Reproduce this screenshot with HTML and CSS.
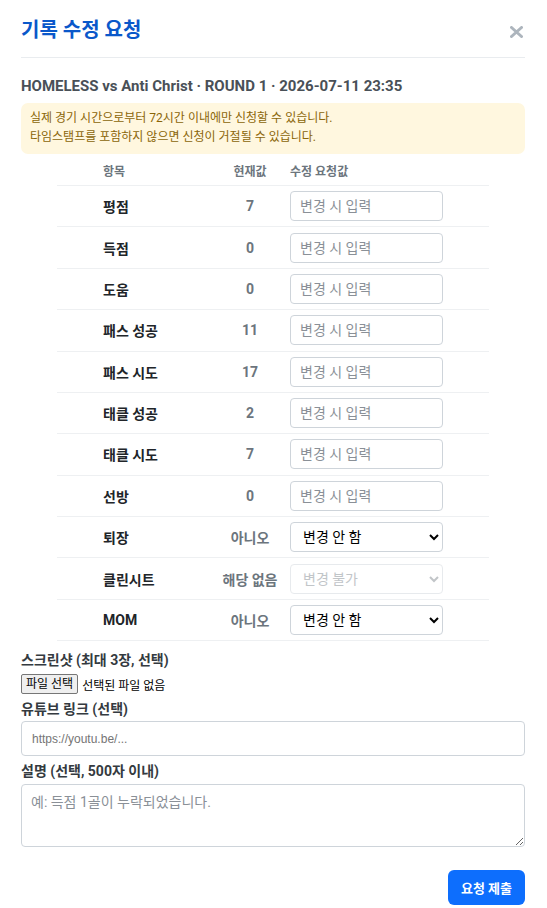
FILE: index.html
```html
<!DOCTYPE html>
<html lang="ko">
<head>
    <meta charset="UTF-8">
    <meta name="viewport" content="width=device-width, initial-scale=1.0">
    <title>기록 수정 요청</title>
    <link rel="stylesheet" href="styles.css">
</head>
<body>
    <div class="modal">
        <div class="modal-header">
            <h2>기록 수정 요청</h2>
            <button class="close-button" type="button" aria-label="닫기">
                <svg viewBox="0 0 13 12" width="13" height="12">
                    <path d="M1.5 1.5 L11.5 10.5 M11.5 1.5 L1.5 10.5" stroke="#adb5bd" stroke-width="3" stroke-linecap="round" fill="none" />
                </svg>
            </button>
        </div>

        <div class="match-info">HOMELESS vs Anti Christ · ROUND 1 · 2026-07-11 23:35</div>

        <div class="notice">
            실제 경기 시간으로부터 72시간 이내에만 신청할 수 있습니다.<br>
            타임스탬프를 포함하지 않으면 신청이 거절될 수 있습니다.
        </div>

        <table class="stat-table">
            <thead>
                <tr>
                    <th class="col-name">항목</th>
                    <th class="col-current">현재값</th>
                    <th class="col-new">수정 요청값</th>
                </tr>
            </thead>
            <tbody>
                <tr>
                    <td class="col-name">평점</td>
                    <td class="col-current">7</td>
                    <td class="col-new"><input type="text" placeholder="변경 시 입력"></td>
                </tr>
                <tr>
                    <td class="col-name">득점</td>
                    <td class="col-current">0</td>
                    <td class="col-new"><input type="text" placeholder="변경 시 입력"></td>
                </tr>
                <tr>
                    <td class="col-name">도움</td>
                    <td class="col-current">0</td>
                    <td class="col-new"><input type="text" placeholder="변경 시 입력"></td>
                </tr>
                <tr>
                    <td class="col-name">패스 성공</td>
                    <td class="col-current">11</td>
                    <td class="col-new"><input type="text" placeholder="변경 시 입력"></td>
                </tr>
                <tr>
                    <td class="col-name">패스 시도</td>
                    <td class="col-current">17</td>
                    <td class="col-new"><input type="text" placeholder="변경 시 입력"></td>
                </tr>
                <tr>
                    <td class="col-name">태클 성공</td>
                    <td class="col-current">2</td>
                    <td class="col-new"><input type="text" placeholder="변경 시 입력"></td>
                </tr>
                <tr>
                    <td class="col-name">태클 시도</td>
                    <td class="col-current">7</td>
                    <td class="col-new"><input type="text" placeholder="변경 시 입력"></td>
                </tr>
                <tr>
                    <td class="col-name">선방</td>
                    <td class="col-current">0</td>
                    <td class="col-new"><input type="text" placeholder="변경 시 입력"></td>
                </tr>
                <tr>
                    <td class="col-name">퇴장</td>
                    <td class="col-current">아니오</td>
                    <td class="col-new">
                        <select>
                            <option>변경 안 함</option>
                            <option>예</option>
                            <option>아니오</option>
                        </select>
                    </td>
                </tr>
                <tr>
                    <td class="col-name">클린시트</td>
                    <td class="col-current">해당 없음</td>
                    <td class="col-new">
                        <select disabled>
                            <option>변경 불가</option>
                        </select>
                    </td>
                </tr>
                <tr>
                    <td class="col-name">MOM</td>
                    <td class="col-current">아니오</td>
                    <td class="col-new">
                        <select>
                            <option>변경 안 함</option>
                            <option>예</option>
                            <option>아니오</option>
                        </select>
                    </td>
                </tr>
            </tbody>
        </table>

        <label class="field-label first">스크린샷 (최대 3장, 선택)</label>
        <div class="file-row">
            <label class="file-button" for="screenshots">파일 선택</label>
            <span class="file-status">선택된 파일 없음</span>
            <input type="file" id="screenshots" class="file-hidden" multiple accept="image/*">
        </div>

        <label class="field-label" for="youtube">유튜브 링크 (선택)</label>
        <input type="text" id="youtube" class="url-input" placeholder="https://youtu.be/...">

        <label class="field-label" for="desc">설명 (선택, 500자 이내)</label>
        <textarea id="desc" class="desc-input" maxlength="500" placeholder="예: 득점 1골이 누락되었습니다."></textarea>

        <div class="actions">
            <button type="button" class="submit-button">요청 제출</button>
        </div>
    </div>
</body>
</html>
```

FILE: styles.css
```css
body {
    margin: 0;
    background: #fff;
    font-family: Roboto, "Noto Sans CJK KR", sans-serif;
    color: #212529;
}

.modal {
    padding: 17px 22px 0 21px;
}

.modal-header {
    display: flex;
    justify-content: space-between;
    align-items: center;
    padding-bottom: 14px;
    border-bottom: 1px solid #e9ecef;
}

.modal-header h2 {
    margin: 0;
    font-size: 20px;
    line-height: 26px;
    font-weight: 700;
    color: #0a58ca;
}

.close-button {
    border: none;
    background: none;
    padding: 0;
    margin-right: 2px;
    margin-top: 3px;
    cursor: pointer;
    display: flex;
}

.match-info {
    margin-top: 18px;
    font-size: 15px;
    line-height: 20px;
    font-weight: 700;
    color: #495057;
}

.notice {
    margin-top: 7px;
    padding: 6px 10px 7px 9px;
    background: #fff7df;
    border-radius: 7px;
    font-size: 12px;
    line-height: 19px;
    color: #8a6508;
}

.stat-table {
    width: 432px;
    margin: 2px auto 0;
    border-collapse: collapse;
}

.stat-table th {
    font-size: 12px;
    font-weight: 600;
    color: #6c757d;
    padding: 8px 0 5px;
    line-height: 16px;
    border-bottom: 1px solid #eef0f2;
}

.stat-table td {
    padding: 5.2px 0;
    border-bottom: 1px solid #eef0f2;
    font-size: 14px;
    font-weight: 700;
}

.col-name {
    width: 107px;
    padding-left: 46px !important;
    text-align: left;
    color: #212529;
}

.col-current {
    width: 80px;
    text-align: center;
    color: #6c757d !important;
}

.col-new {
    text-align: left;
}

.col-new input,
.col-new select {
    box-sizing: border-box;
    width: 153px;
    height: 30px;
    border: 1px solid #ced4da;
    border-radius: 4px;
    background: #fff;
    font-family: inherit;
    font-size: 14px;
    color: #212529;
    display: block;
}

.col-new input {
    padding: 0 9px;
}

.col-new select {
    padding: 0 8px;
    color: #000;
}

.col-new select:disabled {
    color: #a8adb2;
    border-color: #dee2e6;
}

input::placeholder,
textarea::placeholder {
    color: #8a9097;
}

.field-label {
    display: block;
    font-size: 14px;
    font-weight: 700;
    line-height: 20px;
    color: #343a40;
    margin-top: 5px;
}

.field-label.first {
    margin-top: 9px;
}

.file-row {
    display: flex;
    align-items: center;
    margin-top: 4px;
    font-size: 12px;
}

.file-button {
    box-sizing: border-box;
    height: 20px;
    padding: 1px 4px;
    background: #efefef;
    border: 1px solid #767676;
    border-radius: 2px;
    color: #000;
    line-height: 16px;
    cursor: pointer;
}

.file-status {
    margin-left: 4px;
    color: #000;
}

.file-hidden {
    display: none;
}

.url-input {
    display: block;
    box-sizing: border-box;
    width: 100%;
    height: 35px;
    margin-top: 2px;
    padding: 0 10px;
    border: 1px solid #ced4da;
    border-radius: 4px;
    font-size: 12px;
}

.url-input::placeholder {
    color: #757575;
}

.desc-input {
    display: block;
    box-sizing: border-box;
    width: 100%;
    height: 63px;
    margin-top: 3px;
    padding: 6px 9px;
    border: 1px solid #ced4da;
    border-radius: 4px;
    font-family: inherit;
    font-size: 14px;
    resize: vertical;
}

.actions {
    display: flex;
    justify-content: flex-end;
    margin-top: 23px;
}

.submit-button {
    height: 35px;
    padding: 0 13px;
    border: none;
    border-radius: 6px;
    background: #0d6efd;
    color: #fff;
    font-family: inherit;
    font-size: 13px;
    font-weight: 700;
    cursor: pointer;
}
```
